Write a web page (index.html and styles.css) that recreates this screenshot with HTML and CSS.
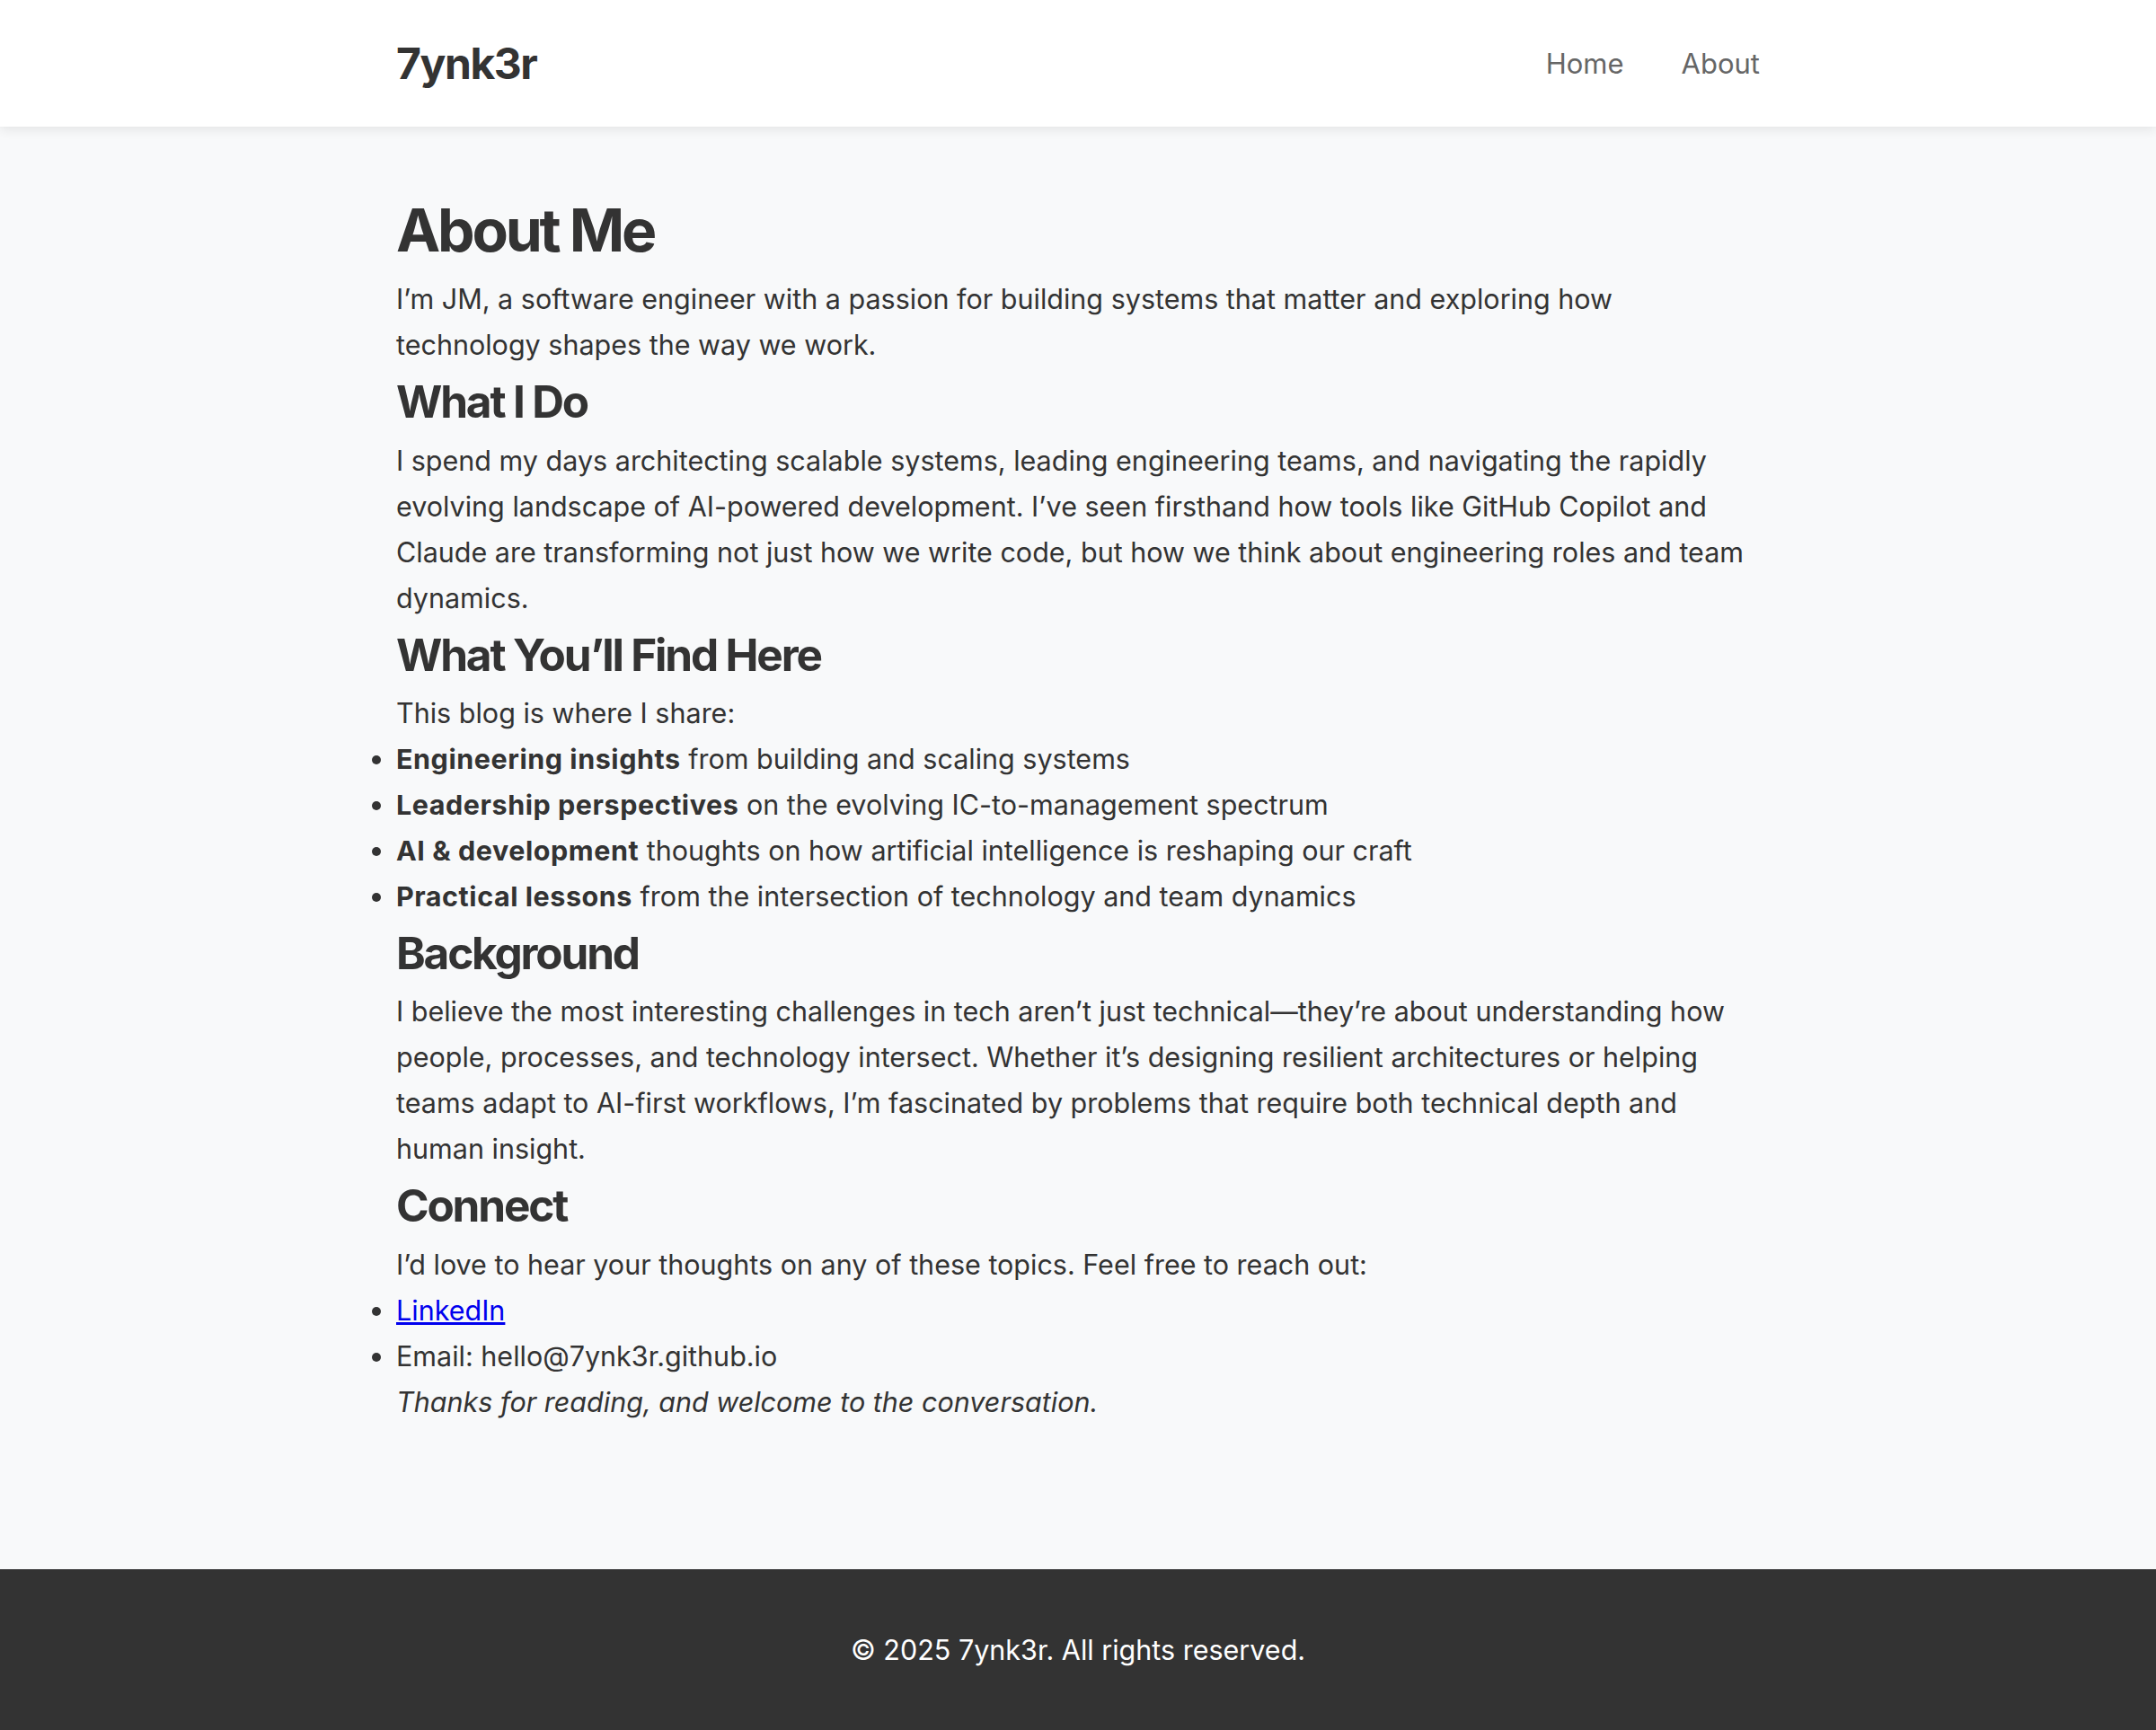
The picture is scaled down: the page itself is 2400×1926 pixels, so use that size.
FILE: index.html
```html
<!DOCTYPE html>
<html lang="en">
<head>
<meta charset="utf-8">
<title>About - 7ynk3r</title>
<link rel="stylesheet" href="styles.css">
</head>
<body>
<header class="site-header">
  <div class="container header-inner">
    <a class="logo" href="#">7ynk3r</a>
    <nav class="nav">
      <a href="#">Home</a>
      <a href="#">About</a>
    </nav>
  </div>
</header>
<main class="site-main">
  <article class="container content">
    <h1>About Me</h1>
    <p>I’m JM, a software engineer with a passion for building systems that matter and exploring how technology shapes the way we work.</p>
    <h2>What I Do</h2>
    <p>I spend my days architecting scalable systems, leading engineering teams, and navigating the rapidly evolving landscape of AI-powered development. I’ve seen firsthand how tools like GitHub Copilot and Claude are transforming not just how we write code, but how we think about engineering roles and team dynamics.</p>
    <h2>What You’ll Find Here</h2>
    <p>This blog is where I share:</p>
    <ul>
      <li><strong>Engineering insights</strong> from building and scaling systems</li>
      <li><strong>Leadership perspectives</strong> on the evolving IC-to-management spectrum</li>
      <li><strong>AI &amp; development</strong> thoughts on how artificial intelligence is reshaping our craft</li>
      <li><strong>Practical lessons</strong> from the intersection of technology and team dynamics</li>
    </ul>
    <h2>Background</h2>
    <p>I believe the most interesting challenges in tech aren’t just technical—they’re about understanding how people, processes, and technology intersect. Whether it’s designing resilient architectures or helping teams adapt to AI-first workflows, I’m fascinated by problems that require both technical depth and human insight.</p>
    <h2>Connect</h2>
    <p>I’d love to hear your thoughts on any of these topics. Feel free to reach out:</p>
    <ul>
      <li><a class="link" href="#">LinkedIn</a></li>
      <li>Email: hello@7ynk3r.github.io</li>
    </ul>
    <p><em>Thanks for reading, and welcome to the conversation.</em></p>
  </article>
</main>
<footer class="site-footer">
  <p>© 2025 7ynk3r. All rights reserved.</p>
</footer>
</body>
</html>
```
FILE: styles.css
```css
* { box-sizing: border-box; }

html, body {
  margin: 0;
  padding: 0;
}

body {
  font-family: Inter, "Noto Sans", "Liberation Sans", sans-serif;
  font-size: 30.5px;
  line-height: 51px;
  color: #333;
  background: #f8f9fa;
  min-height: 100vh;
  display: flex;
  flex-direction: column;
}

.container {
  width: 1518px;
  margin: 0 auto;
}

.site-header {
  background: #fff;
  height: 141px;
  box-shadow: 0 3px 12px rgba(0, 0, 0, 0.09);
  position: relative;
  z-index: 1;
}

.header-inner {
  height: 100%;
  display: flex;
  align-items: center;
  justify-content: space-between;
}

.logo {
  font-size: 48px;
  font-weight: 700;
  letter-spacing: -0.03em;
  color: #333;
  text-decoration: none;
  line-height: 1;
}

.nav {
  display: flex;
  gap: 64px;
}

.nav a {
  font-size: 31px;
  color: #666;
  text-decoration: none;
  line-height: 1;
}

.site-main {
  flex: 1;
  padding-top: 76px;
  padding-bottom: 120px;
}

.content h1 {
  font-size: 66px;
  line-height: 1.2;
  font-weight: 700;
  letter-spacing: -0.049em;
  margin: 0 0 11px;
}

.content h2 {
  font-size: 49.5px;
  line-height: 1.2;
  font-weight: 700;
  letter-spacing: -0.044em;
  margin: 9px 0;
}

.content p {
  margin: 0;
}

.content ul {
  margin: 0;
  padding: 0;
  list-style: disc outside;
}

.content strong {
  font-weight: 700;
  letter-spacing: 0.018em;
}

.link {
  color: #0000ee;
  text-decoration: underline;
}

.site-footer {
  background: #333;
  color: #fff;
  text-align: center;
  padding: 64px 0;
  line-height: 51px;
}

.site-footer p {
  margin: 0;
}
```
